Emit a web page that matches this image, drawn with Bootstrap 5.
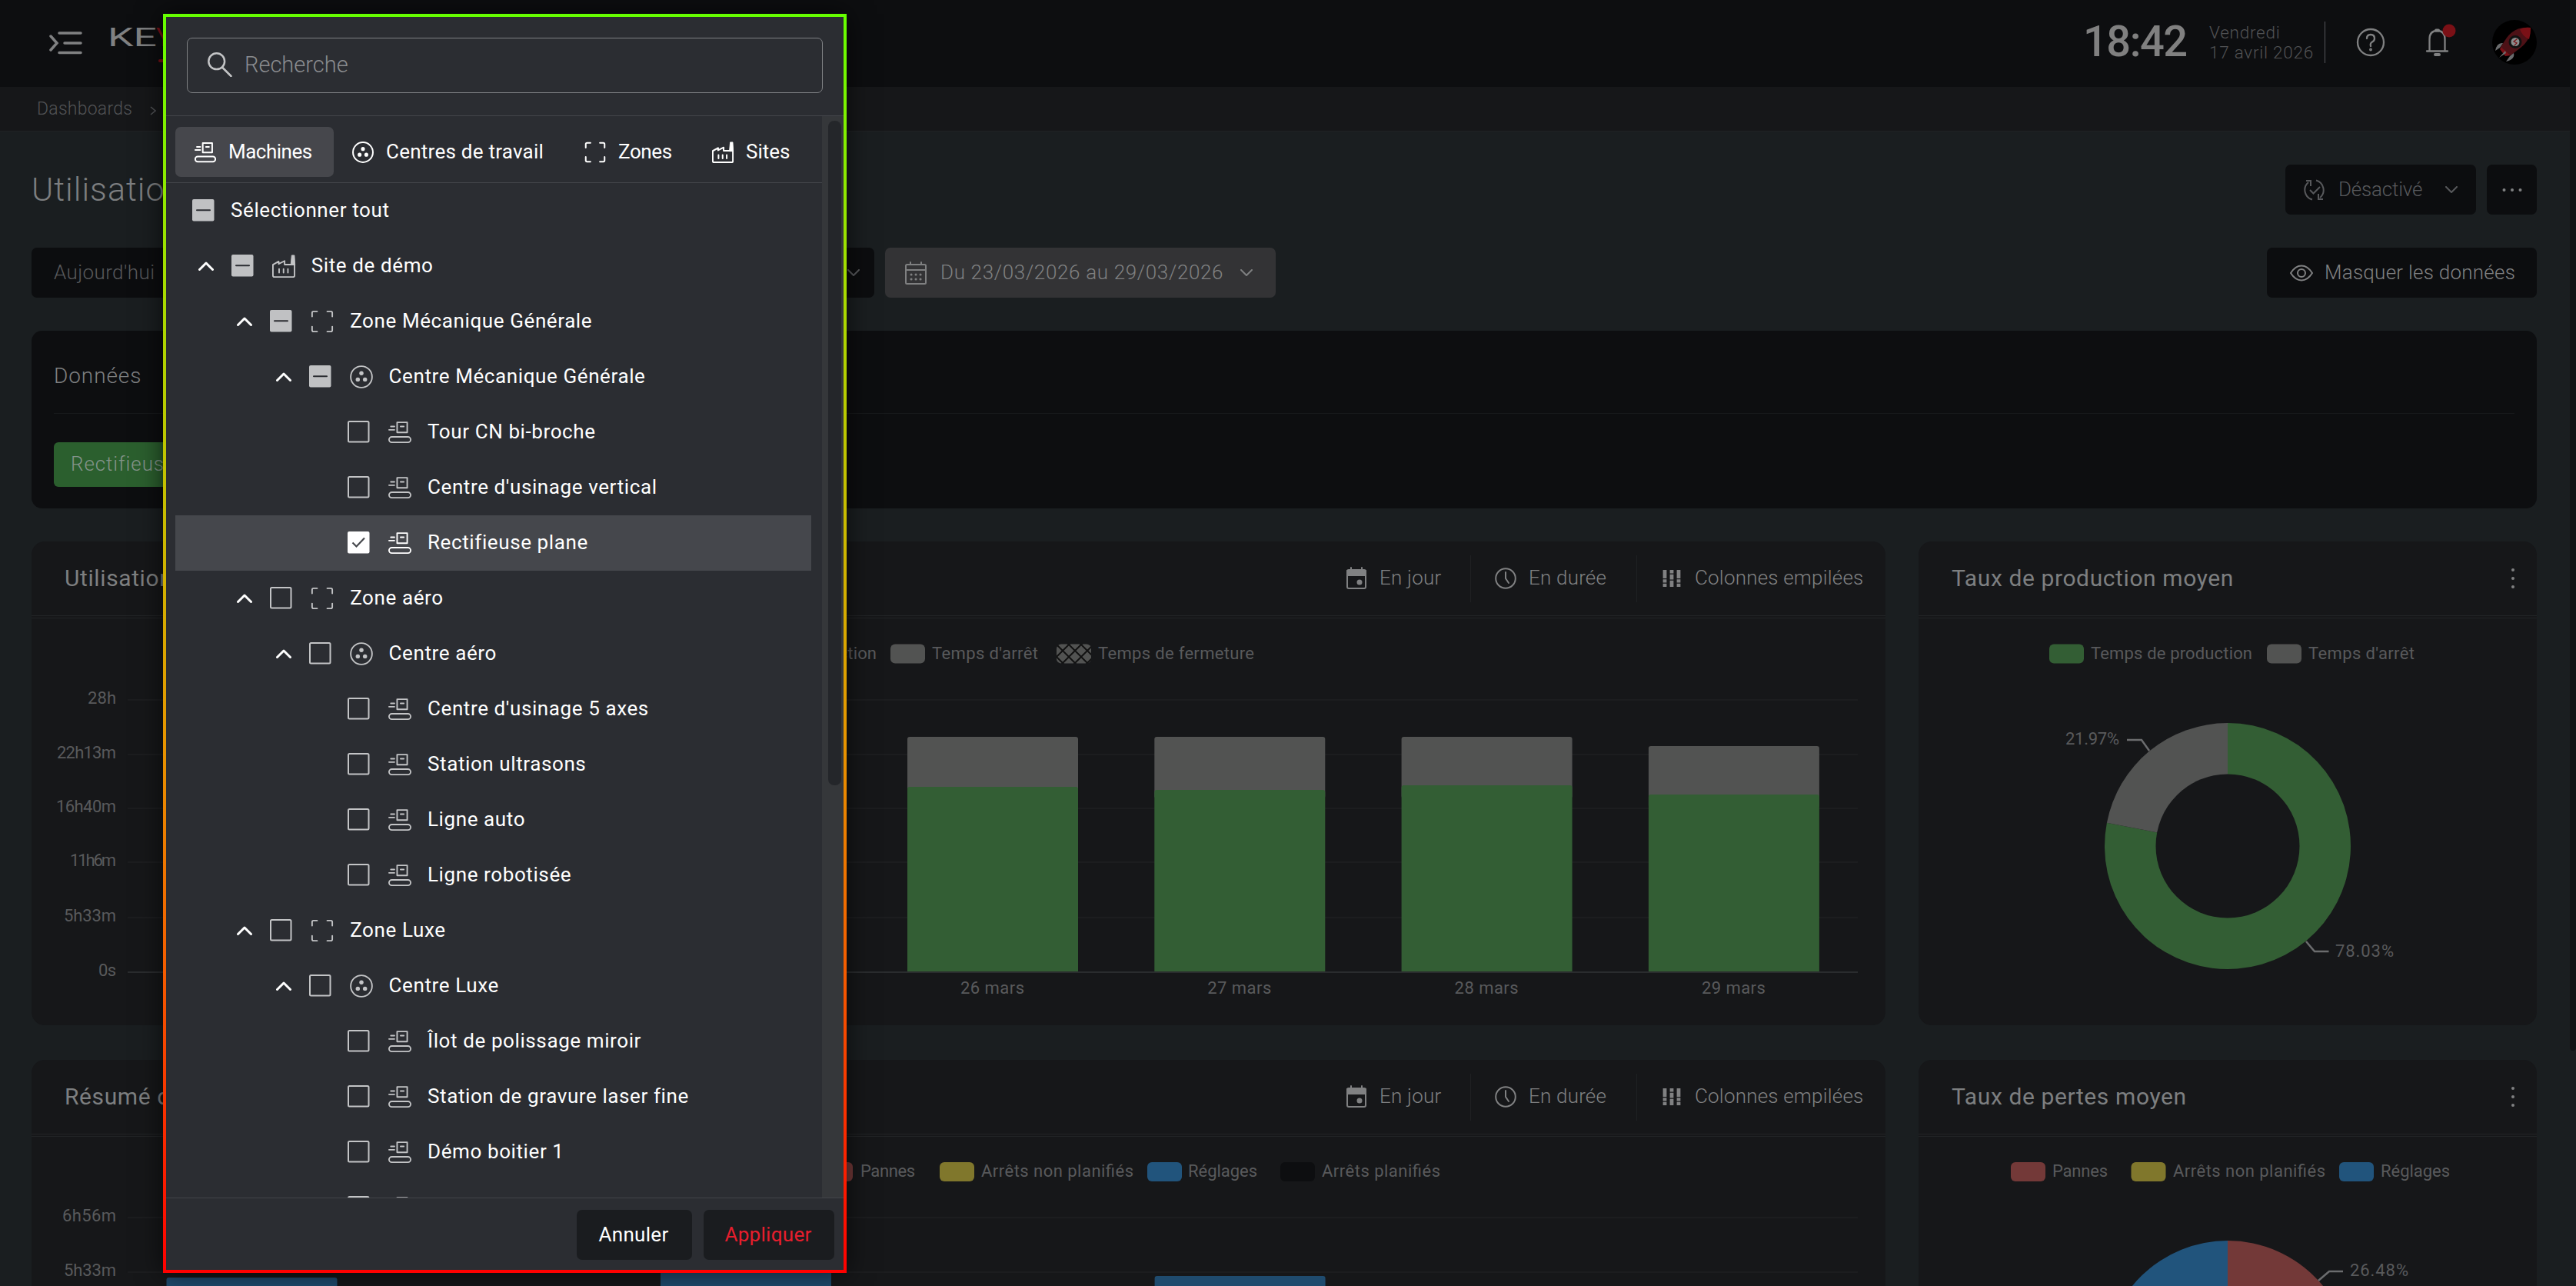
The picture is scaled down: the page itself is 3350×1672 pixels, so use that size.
<!DOCTYPE html>
<html lang="fr">
<head>
  <meta charset="UTF-8" />
  <title>Utilisation</title>
  <link rel="stylesheet" href="https://cdn.jsdelivr.net/npm/bootstrap@5.3.2/dist/css/bootstrap.min.css">
  <style>
    body { height: 1672px; overflow: hidden; background: #1a1e20; color: #7d7f80; font-family: Roboto, "Liberation Sans", sans-serif; font-size: 26px; font-weight: 300; line-height: 1.2; }
    svg { flex: none; display: block; }
    .ico { width: 30px; height: 30px; fill: none; stroke: currentColor; stroke-width: 2; stroke-linecap: round; stroke-linejoin: round; }
    .page { width: 3342px; height: 1672px; }
    .page-scroll { width: 8px; height: 1672px; background: #1c1e20; }
    .page-scroll div { height: 1366px; background: #101214; border-radius: 0 0 8px 8px; }

    .topbar { height: 113px; background: #0d0e10; padding: 0 43px 3px 64px; }
    .clock { font-size: 56px; font-weight: 500; letter-spacing: -1.5px; color: #808080; width: 164px; }
    .today { font-size: 22.5px; line-height: 26px; color: #515254; width: 150px; letter-spacing: .75px; }
    .vline { width: 1px; height: 54px; background: #55565a; }
    .crumbs { height: 58px; background: #161719; border-bottom: 1px solid #202224; padding: 0 48px; font-size: 23px; color: #515356; }
    .crumbs span { width: 147px; letter-spacing: .25px; }

    .main { padding: 43px 43px 0 41px; gap: 43px; }
    .page-title { font-size: 43px; font-weight: 300; line-height: 65px; letter-spacing: 1px; color: #7d7f80; }
    .tool-btn { height: 65px; border-radius: 7px; background: #0c0d0f; color: #58595c; }
    .tool-btn.lit { background: #333335; color: #7f8081; }
    .main-btn { color: #808182; }
    .data-panel { height: 231px; background: #0d0e10; border-radius: 14px; padding: 0 29px; font-size: 28px; letter-spacing: .9px; }
    .data-panel .head { height: 108px; padding-top: 10px; border-bottom: 1px solid #17191b; }
    .chip { height: 58px; width: 240px; margin-top: 37px; padding-left: 22px; border-radius: 6px; background: #2b5f2e; color: #83938a; font-size: 26px; }

    .dash { gap: 43px; margin-bottom: 2px; }
    .tile { height: 629px; background: #161719; border-radius: 17px; overflow: hidden; }
    .tile.wide { width: 2411px; }
    .tile.side { width: 804px; }
    .tile .head { height: 97px; padding: 0 29px 0 43px; border-bottom: 1px solid #222426; }
    .tile .plot { margin-top: 2px; border-top: 1px solid #222426; }
    .tile h2 { font-size: 30px; font-weight: 400; letter-spacing: .6px; margin: 0; color: #7d7f80; }
    .tile .tools { font-size: 26px; color: #808182; letter-spacing: .2px; white-space: nowrap; }
    .tools .sep { width: 1px; height: 61px; background: #1f2123; }
    .plot text { font-size: 22px; font-weight: 400; fill: #595a5c; }

    .picker { position: absolute; left: 212px; top: 18px; width: 889px; height: 1637px; padding: 4px; background: linear-gradient(#66ff00, #a8dc00 22%, #cdb800 42%, #e89400 58%, #f45c00 76%, #ff0000); box-shadow: 0 0 32px rgba(0, 0, 0, .65); color: #fff; font-weight: 400; }
    .picker-in { height: 1629px; background: #2b2d32; }
    .search { margin: 27px 26px 29px 27px; width: 827px; height: 72px; border: 1px solid #7f8184; border-radius: 7px; padding: 0 0 2px 26px; gap: 16px; font-size: 29px; color: #8a8c8f; }
    .search svg { color: #c3c4c6; }
    .picker-body { height: 1408px; border-top: 1px solid #43454a; border-bottom: 1px solid #43454a; overflow: hidden; }
    .tabs { height: 87px; padding: 14px 0 0 12px; border-bottom: 1px solid #43454a; }
    .tab { height: 65px; padding-left: 25px; gap: 16px; border-radius: 7px; white-space: nowrap; }
    .tab.active { background: #46474c; }
    .tab .ico { width: 28px; height: 28px; stroke-width: 2.3; }
    .tree-row { height: 72px; width: 827px; margin-left: 12px; color: #c3c4c6; }
    .tree-row.picked { background: #45474c; color: #fff; }
    .tree-row .chev { width: 20px; height: 12px; margin-right: 23px; color: #fff; stroke-width: 3; }
    .tree-row .kind { width: 32px; height: 30px; margin: 0 20px 0 23px; }
    .tree-row .label { color: #fff; letter-spacing: .6px; white-space: nowrap; }
    .check { width: 29px; height: 29px; margin-bottom: 2px; }
    .track { width: 28px; height: 1407px; padding: 6px 3px 0 8px; background: #35373a; }
    .track div { height: 864px; border-radius: 8px; background: #24262a; }
    .picker-foot { height: 92px; padding: 15px 12px 0 0; gap: 15px; }
    .foot-btn { height: 65px; border-radius: 7px; padding-right: 2px; background: #1a1c1f; color: #fff; letter-spacing: .3px; }
    .foot-btn.apply { color: #e61e2d; }
  </style>
</head>
<body class="d-flex">
  <!-- icon sprite -->
  <svg width="0" height="0" class="position-absolute">
    <defs>
      <symbol id="machine" viewBox="0 0 32 32"><rect x="12.2" y="2.2" width="14" height="14" /><path d="M17 8h4.5M3.5 8h5M1 12.6h7.5" /><rect x="1" y="22.4" width="30" height="7.6" rx="3.8" /></symbol>
      <symbol id="centre" viewBox="0 0 32 32"><circle cx="16" cy="16" r="14.8" /><g fill="currentColor" stroke="none"><circle cx="16" cy="11" r="2.9" /><circle cx="11" cy="19.6" r="2.9" /><circle cx="21" cy="19.6" r="2.9" /></g></symbol>
      <symbol id="zone" viewBox="0 0 32 32"><path d="M2 9V4q0-2 2-2h5M23 2h5q2 0 2 2v5M30 23v5q0 2-2 2h-5M9 30H4q-2 0-2-2v-5" /></symbol>
      <symbol id="site" viewBox="0 0 32 32"><path d="M1 14l8-4.5V13l8.2-4.2v5H31V29q0 2-2 2H3q-2 0-2-2zM9.6 20v5M15.7 20v5M21.8 20v5" /><path d="M25.8 14L27 1h3.8l.8 13z" fill="currentColor" stroke-width="1" /></symbol>
      <symbol id="up" viewBox="0 0 20 12"><path d="M1.5 10.5L10 2l8.5 8.5" /></symbol>
      <symbol id="down" viewBox="0 0 16 10"><path d="M1 1l7 7 7-7" /></symbol>
      <symbol id="box-off" viewBox="0 0 29 29"><rect x="1" y="1" width="26.5" height="26.5" rx="1.5" fill="none" stroke="currentColor" stroke-width="2" /></symbol>
      <symbol id="box-mid" viewBox="0 0 29 29"><rect width="28.5" height="28.5" rx="2" fill="#c0c1c3" /><path d="M6 14.2h17" stroke="#2b2d32" stroke-width="2" stroke-linecap="round" /></symbol>
      <symbol id="box-on" viewBox="0 0 29 29"><rect width="28.5" height="28.5" rx="2" fill="#fff" /><path d="M6.5 14.5l5 5 10.5-11" fill="none" stroke="#45474c" stroke-width="2.2" /></symbol>
      <symbol id="calendar" viewBox="0 0 28 30"><rect x="1" y="4" width="26" height="25" rx="1.5" /><path d="M1 11h26M7 4V1M21 4V1" /><path d="M8 17h.1M14 17h.1M20 17h.1M8 23h.1M14 23h.1M20 23h.1" stroke-width="3" /></symbol>
      <symbol id="day" viewBox="0 0 26 30"><rect x="1" y="4" width="24" height="24" rx="2" /><path d="M1 5h24v6H1zM6 4V1M20 4V1" fill="currentColor" /><circle cx="17" cy="20" r="2.5" fill="currentColor" /></symbol>
      <symbol id="clock" viewBox="0 0 28 28"><circle cx="14" cy="14" r="12.8" /><path d="M14 6v8l4 6" /></symbol>
      <symbol id="columns" viewBox="0 0 24 24"><path d="M3 1v11M3 13.2v4.3M3 18.7v4.3M12 1v4.5M12 6.7v6.8M12 14.7v8.3M21 1v11M21 13.2v4.3M21 18.7v4.3" stroke-width="4.8" stroke-linecap="butt" /></symbol>
    </defs>
  </svg>

  <div class="page overflow-hidden">
    <header class="topbar d-flex align-items-center">
      <svg width="44" height="34" viewBox="0 0 44 34" fill="none" stroke="#808182" stroke-width="3.5" stroke-linecap="round"><path d="M13 5h28M20 18h21M13 30.500h28M2 9l8 9-8 9" /></svg>
      <svg class="ms-4" width="120" height="60" viewBox="132 25 120 60">
        <text x="140" y="60" font-size="33" font-weight="400" fill="#808182" textLength="64" lengthAdjust="spacingAndGlyphs">KE</text>
        <text x="203" y="60" font-size="33" font-weight="400" fill="#7a0f16">Y</text>
        <path d="M208 79h20" stroke="#7a0f16" stroke-width="4" stroke-linecap="round" />
      </svg>
      <div class="clock ms-auto">18:42</div>
      <div class="today">Vendredi<br>17 avril 2026</div>
      <div class="vline"></div>
      <svg width="275" height="70" viewBox="3024 20 275 70" fill="none" stroke="#808182" stroke-width="2.3" stroke-linecap="round">
        <circle cx="3083" cy="55" r="17" />
        <path d="M3078 50q0-5 5-5t5 5q0 3-3 4.500t-2 5.500" /><circle cx="3083" cy="64.5" r=".8" />
        <path d="M3156 66.500h27M3159.500 66V51q0-11 10-11t10 11v15" /><path d="M3168 39.500h3M3167 71h5" stroke-width="4" />
        <circle cx="3185" cy="40" r="8.5" fill="#7a1016" stroke="none" />
        <g stroke="none">
          <circle cx="3270" cy="55" r="29" fill="#000" />
          <path d="M3253 60l12 12-7 1-7-9z" fill="#7a1016" />
          <path d="M3291 36q-20-2-31 13l-8 12 13 11 13-10q13-10 13-26z" fill="#4d1116" />
          <path d="M3291 36q-8-1-14 2 3 9 12 13 2-7 2-15z" fill="#7a1016" />
          <path d="M3255 56q-8-1-10 10l6-4zM3258 66l-8 9 9-6zM3269 69q2 8-10 11l5-7z" fill="#6a6c6e" />
          <circle cx="3271" cy="54.5" r="7" fill="#8a8c8c" stroke="#111" stroke-width="3" />
          <path d="M3273 51l-4 3 4 2-3 3" fill="none" stroke="#7a1016" stroke-width="1.2" />
        </g>
      </svg>
    </header>

    <div class="crumbs d-flex align-items-center">
      <span>Dashboards</span>
      <svg class="mt-1" width="8" height="12" viewBox="0 0 8 12" fill="none" stroke="currentColor" stroke-width="1.5"><path d="M1 1l6 5-6 5" /></svg>
    </div>

    <div class="main d-flex flex-column">
      <div class="d-flex">
        <h1 class="page-title m-0">Utilisation</h1>
        <div class="tool-btn d-flex align-items-center ms-auto" style="width: 248px">
          <svg class="ms-4" width="28" height="28" viewBox="0 0 28 28" fill="none" stroke="currentColor" stroke-width="2"><path d="M11 26.500A13 13 0 0 1 6 4M3 2h6v7M16 1.500A13 13 0 0 1 21 24M25 26h-6v-7M8 14l4.500 4.500 8.500-8.500" /></svg>
          <span style="margin-left: 17px; letter-spacing: -.2px">Désactivé</span>
          <svg class="ico ms-auto me-4" style="width: 16px; height: 10px"><use href="#down" /></svg>
        </div>
        <div class="tool-btn main-btn d-flex align-items-center justify-content-center" style="width: 65px; margin-left: 14px">
          <svg width="26" height="6" viewBox="0 0 26 6" fill="currentColor"><circle cx="2.5" cy="3" r="2" /><circle cx="13" cy="3" r="2" /><circle cx="23.5" cy="3" r="2" /></svg>
        </div>
      </div>

      <div class="d-flex">
        <div class="tool-btn d-flex align-items-center" style="width: 1096px; padding: 0 19px 0 29px">
          <span style="letter-spacing: .4px">Aujourd'hui</span>
          <svg class="ico ms-auto" style="width: 16px; height: 10px"><use href="#down" /></svg>
        </div>
        <div class="tool-btn lit d-flex align-items-center" style="width: 508px; margin-left: 14px; padding: 0 30px 0 26px">
          <svg class="ico" style="width: 28px; height: 30px"><use href="#calendar" /></svg>
          <span style="margin-left: 18px; letter-spacing: .65px">Du 23/03/2026 au 29/03/2026</span>
          <svg class="ico ms-auto" style="width: 16px; height: 10px"><use href="#down" /></svg>
        </div>
        <div class="tool-btn main-btn d-flex align-items-center ms-auto" style="width: 351px; padding-left: 30px">
          <svg width="30" height="22" viewBox="0 0 30 22" fill="none" stroke="currentColor" stroke-width="2"><path d="M1 11Q7 1.500 15 1.500T29 11Q23 20.500 15 20.500T1 11z" /><circle cx="15" cy="11" r="5" /></svg>
          <span style="margin-left: 15px; letter-spacing: .25px">Masquer les données</span>
        </div>
      </div>

      <div class="data-panel">
        <div class="head d-flex align-items-center">Données</div>
        <div class="chip d-flex align-items-center">Rectifieuse plane</div>
      </div>

      <div class="dash d-flex">
        <div class="tile wide">
          <div class="head d-flex align-items-center">
            <h2>Utilisation</h2>
            <div class="tools d-flex align-items-center ms-auto">
              <svg class="ico" style="width: 26px"><use href="#day" /></svg><span style="width: 118px; margin-left: 17px">En jour</span>
              <div class="sep"></div>
              <svg class="ico" style="width: 28px; margin-left: 31px"><use href="#clock" /></svg><span style="width: 140px; margin-left: 16px">En durée</span>
              <div class="sep"></div>
              <svg class="ico" style="width: 24px; margin-left: 33px"><use href="#columns" /></svg><span style="width: 219px; margin-left: 18px">Colonnes empilées</span>
            </div>
          </div>
          <div class="plot"><svg id="usage" width="2411" height="528" viewBox="41 804 2411 528"></svg></div>
        </div>
        <div class="tile side">
          <div class="head d-flex align-items-center">
            <h2>Taux de production moyen</h2>
            <svg class="ms-auto" width="4" height="28" viewBox="0 0 4 28" fill="#808182"><circle cx="2" cy="3" r="2" /><circle cx="2" cy="14" r="2" /><circle cx="2" cy="25" r="2" /></svg>
          </div>
          <div class="plot"><svg id="rate" width="804" height="528" viewBox="2495 804 804 528"></svg></div>
        </div>
      </div>

      <div class="dash d-flex">
        <div class="tile wide">
          <div class="head d-flex align-items-center">
            <h2>Résumé des pertes</h2>
            <div class="tools d-flex align-items-center ms-auto">
              <svg class="ico" style="width: 26px"><use href="#day" /></svg><span style="width: 118px; margin-left: 17px">En jour</span>
              <div class="sep"></div>
              <svg class="ico" style="width: 28px; margin-left: 31px"><use href="#clock" /></svg><span style="width: 140px; margin-left: 16px">En durée</span>
              <div class="sep"></div>
              <svg class="ico" style="width: 24px; margin-left: 33px"><use href="#columns" /></svg><span style="width: 219px; margin-left: 18px">Colonnes empilées</span>
            </div>
          </div>
          <div class="plot"><svg id="losses" width="2411" height="528" viewBox="41 1478 2411 528"></svg></div>
        </div>
        <div class="tile side">
          <div class="head d-flex align-items-center">
            <h2>Taux de pertes moyen</h2>
            <svg class="ms-auto" width="4" height="28" viewBox="0 0 4 28" fill="#808182"><circle cx="2" cy="3" r="2" /><circle cx="2" cy="14" r="2" /><circle cx="2" cy="25" r="2" /></svg>
          </div>
          <div class="plot"><svg id="loss-rate" width="804" height="528" viewBox="2495 1478 804 528"></svg></div>
        </div>
      </div>
    </div>
  </div>
  <div class="page-scroll"><div></div></div>

  <div class="picker">
    <div class="picker-in overflow-hidden">
      <div class="search d-flex align-items-center fw-light">
        <svg width="32" height="32" viewBox="0 0 32 32" fill="none" stroke="currentColor" stroke-width="2.5" stroke-linecap="round"><circle cx="11.7" cy="11.7" r="10.4" /><path d="M19 19.500L30.500 31" /></svg>
        <span>Recherche</span>
      </div>
      <div class="picker-body d-flex">
        <div class="flex-grow-1">
          <div class="tabs d-flex">
            <div class="tab active d-flex align-items-center" style="width: 206px; letter-spacing: -.5px"><svg class="ico"><use href="#machine" /></svg>Machines</div>
            <div class="tab d-flex align-items-center" style="width: 301px; padding-left: 24px; letter-spacing: .25px"><svg class="ico"><use href="#centre" /></svg>Centres de travail</div>
            <div class="tab d-flex align-items-center" style="width: 166px; letter-spacing: -.4px"><svg class="ico"><use href="#zone" /></svg>Zones</div>
            <div class="tab d-flex align-items-center"><svg class="ico"><use href="#site" /></svg>Sites</div>
          </div>
          <div id="tree"></div>
        </div>
        <div class="track"><div></div></div>
      </div>
      <div class="picker-foot d-flex justify-content-end">
        <div class="foot-btn d-flex align-items-center justify-content-center" style="width: 150px">Annuler</div>
        <div class="foot-btn apply d-flex align-items-center justify-content-center" style="width: 170px">Appliquer</div>
      </div>
    </div>
  </div>

  <script>
    // level, icon, checkbox state, label
    const rows = [
      [0, 'site', 'mid', 'Site de démo'],
      [1, 'zone', 'mid', 'Zone Mécanique Générale'],
      [2, 'centre', 'mid', 'Centre Mécanique Générale'],
      [3, 'machine', 'off', 'Tour CN bi-broche'],
      [3, 'machine', 'off', "Centre d'usinage vertical"],
      [3, 'machine', 'on', 'Rectifieuse plane'],
      [1, 'zone', 'off', 'Zone aéro'],
      [2, 'centre', 'off', 'Centre aéro'],
      [3, 'machine', 'off', "Centre d'usinage 5 axes"],
      [3, 'machine', 'off', 'Station ultrasons'],
      [3, 'machine', 'off', 'Ligne auto'],
      [3, 'machine', 'off', 'Ligne robotisée'],
      [1, 'zone', 'off', 'Zone Luxe'],
      [2, 'centre', 'off', 'Centre Luxe'],
      [3, 'machine', 'off', 'Îlot de polissage miroir'],
      [3, 'machine', 'off', 'Station de gravure laser fine'],
      [3, 'machine', 'off', 'Démo boitier 1'],
      [3, 'machine', 'off', '']
    ];
    let tree = '<div class="tree-row d-flex align-items-center" style="padding-left: 22px"><svg class="check"><use href="#box-mid"/></svg><span class="label" style="margin-left: 21px">Sélectionner tout</span></div>';
    for (const [level, icon, state, label] of rows) {
      tree += `<div class="tree-row d-flex align-items-center ${state === 'on' ? 'picked' : ''}" style="padding-left: ${29.8 + level * 50.4}px">
        <svg class="ico chev ${level === 3 ? 'invisible' : ''}"><use href="#up"/></svg>
        <svg class="check"><use href="#box-${state}"/></svg>
        <svg class="ico kind"><use href="#${icon}"/></svg>
        <span class="label">${label}</span></div>`;
    }
    document.getElementById('tree').innerHTML = tree;

    const GREEN = '#335e34', GREY = '#525352', RED = '#733938', YELLOW = '#80772c', BLUE = '#21547c', BLACK = '#0d0e10';

    function label(x, y, text, width, anchor) {
      const fit = width ? `textLength="${width}"` : '';
      return `<text x="${x}" y="${y + 7.8}" ${fit} text-anchor="${anchor || 'start'}">${text}</text>`;
    }
    function legend(y, items) {
      return items.map(([x, fill, text, tx, width]) =>
        `<rect x="${x}" y="${y - 12.5}" width="45" height="25" rx="6" fill="${fill}"/>` + label(tx, y - 1, text, width)).join('');
    }
    function grid(lines) {
      return lines.map(([y, text, width]) =>
        `<path d="M166 ${y}H2416" stroke="${text === '0s' ? '#2a2c2e' : '#1c1d1f'}" stroke-width="2"/>` + label(151, y - 2.8, text, width, 'end')).join('');
    }
    function slice(cx, cy, r, from, to, fill) {
      const a = from * 2 * Math.PI, b = to * 2 * Math.PI;
      return `<path d="M${cx} ${cy}L${cx + r * Math.sin(a)} ${cy - r * Math.cos(a)}A${r} ${r} 0 ${to - from > .5 ? 1 : 0} 1 ${cx + r * Math.sin(b)} ${cy - r * Math.cos(b)}z" fill="${fill}"/>`;
    }

    const days = [['26 mars', 958, 1023], ['27 mars', 958, 1027], ['28 mars', 958, 1021], ['29 mars', 970, 1033]];
    document.getElementById('usage').innerHTML =
      '<defs><pattern id="hatch" x="1374" y="838" width="16" height="16" patternUnits="userSpaceOnUse"><rect width="16" height="16" fill="#525352"/><path d="M0 0l16 16M16 0L0 16" stroke="#111" stroke-width="2"/></pattern></defs>' +
      legend(850, [[874, GREEN, 'Temps de production', 930, 210], [1158, GREY, "Temps d'arrêt", 1212, 138], [1374, 'url(#hatch)', 'Temps de fermeture', 1428, 203]]) +
      grid([[910, '28h', 37], [981, '22h13m', 77], [1051, '16h40m', 78], [1121, '11h6m', 60], [1193, '5h33m', 68], [1264, '0s', 23]]) +
      days.map(([day, top, mid], i) => {
        const x = 1180 + i * 321.3;
        return `<rect x="${x}" y="${top}" width="222" height="80" rx="3" fill="${GREY}"/><path d="M${x} 1263V${mid + 3}q0-3 3-3h216q3 0 3 3V1263z" fill="${GREEN}"/>` + label(x + 110.5, 1284.5, day, 83, 'middle');
      }).join('');

    document.getElementById('rate').innerHTML =
      legend(850, [[2665, GREEN, 'Temps de production', 2719, 210], [2948, GREY, "Temps d'arrêt", 3002, 138]]) +
      slice(2897, 1100, 160, 0, .7803, GREEN) + slice(2897, 1100, 160, .7803, 1, GREY) +
      '<circle cx="2897" cy="1100" r="93.5" fill="#161719"/>' +
      '<path d="M2766 962h19l10 14M2999 1224l11 13h18.500" fill="none" stroke="#6b6c6e" stroke-width="2.5"/>' +
      label(2686, 960, '21.97%', 70) + label(3037, 1236, '78.03%', 76);

    document.getElementById('losses').innerHTML =
      legend(1523.5, [[1064, RED, 'Pannes', 1119, 71], [1222, YELLOW, 'Arrêts non planifiés', 1276, 198], [1492, BLUE, 'Réglages', 1545, 90], [1665, BLACK, 'Arrêts planifiés', 1719, 154]]) +
      grid([[1583, '6h56m', 70], [1654, '5h33m', 68]]) +
      [[216.5, 1661], [859, 1640], [1501.6, 1659]].map(([x, y]) => `<rect x="${x}" y="${y}" width="222" height="200" rx="3" fill="#1f4b6e"/>`).join('');

    document.getElementById('loss-rate').innerHTML =
      legend(1523.5, [[2615, RED, 'Pannes', 2669, 72], [2771.5, YELLOW, 'Arrêts non planifiés', 2826, 198], [3042, BLUE, 'Réglages', 3096, 90]]) +
      slice(2897, 1773, 160, 0, .2648, RED) + slice(2897, 1773, 160, .2648, 1, BLUE) +
      '<path d="M3015 1665l14-12h18" fill="none" stroke="#6b6c6e" stroke-width="2.5"/>' +
      label(3056, 1651, '26.48%', 76);
  </script>
  <script src="https://cdn.jsdelivr.net/npm/bootstrap@5.3.2/dist/js/bootstrap.bundle.min.js"></script>
</body>
</html>
